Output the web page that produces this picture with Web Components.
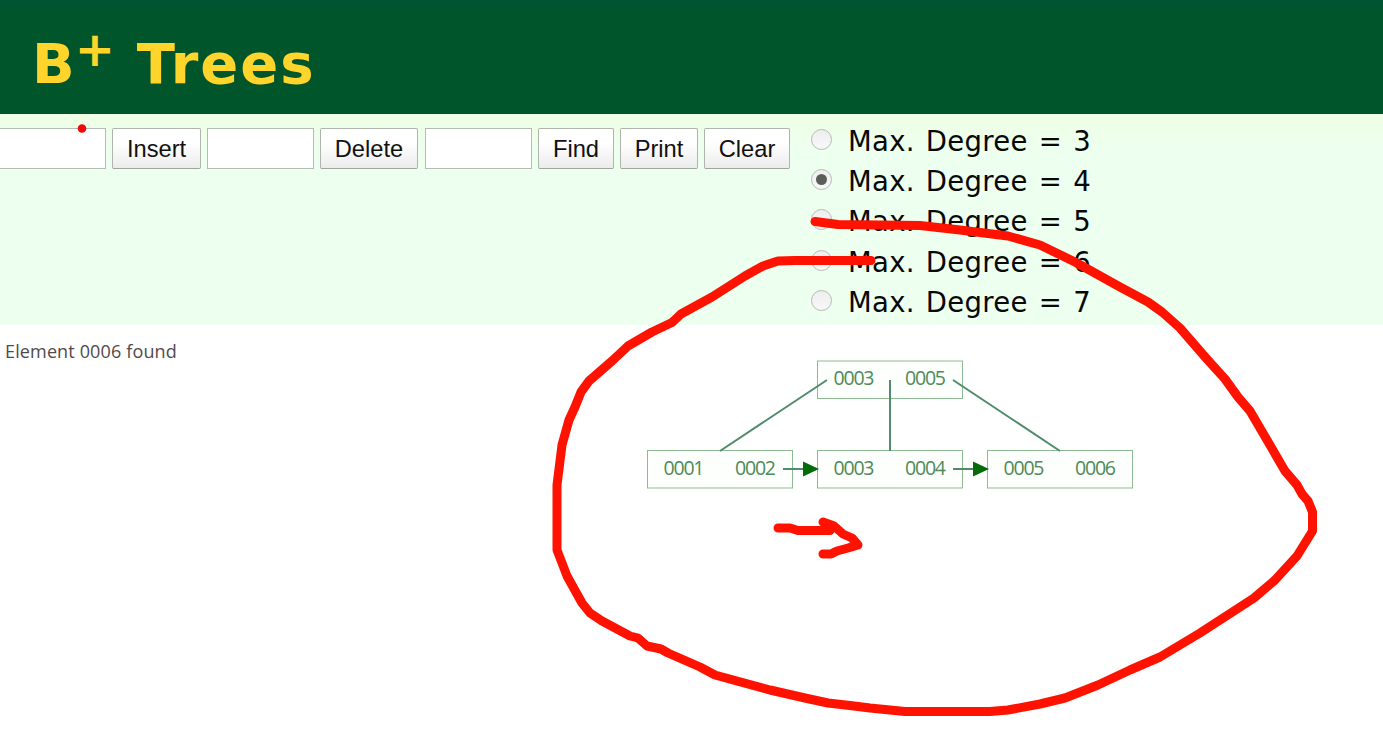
<!DOCTYPE html>
<html lang="en">
<head>
<meta charset="utf-8">
<title>B+ Trees</title>
<style>body{margin:0;background:#fff;overflow:hidden}</style>
</head>
<body>
<bplus-page></bplus-page>
<script>
const define = (name, html) => customElements.define(name, class extends HTMLElement {
  constructor() {
    super();
    const t = document.createElement('template');
    t.innerHTML = html;
    this.attachShadow({ mode: 'open' }).append(t.content.cloneNode(true));
  }
});

define('page-header', `<style>
  :host{display:block;height:114px;box-sizing:border-box;background:linear-gradient(#005336,#00552b 12px);padding:32px 0 0 32px}
  h1{margin:0;font:bold 56px/64px "DejaVu Sans",Verdana,sans-serif;color:#ffd52b;display:flex;white-space:pre}
  .plus{font-size:48px;line-height:34px;width:43px;margin-left:0}
  .word{margin-left:19px;letter-spacing:2px}
</style><h1><span>B</span><span class="plus">+</span><span class="word">Trees</span></h1>`);

define('text-field', `<style>
  :host{display:block;box-sizing:border-box;height:41px;width:107px;border:1px solid #b3bdb3;background:#fff;flex:none}
</style>`);

define('push-button', `<style>
  :host{display:block;box-sizing:border-box;height:41px;flex:none;border:1px solid #adb5ad;border-bottom-color:#9da59d;border-radius:2px;
    background:linear-gradient(#fff 35%,#ececec);font:23.7px/40px "Liberation Sans",Arial,sans-serif;color:#111;text-align:center;white-space:nowrap}
</style><slot></slot>`);

define('radio-option', `<style>
  :host{display:flex;align-items:center;height:40.3px;font:27.5px/40px "DejaVu Sans",Verdana,sans-serif;word-spacing:2px;letter-spacing:.3px;color:#080808;white-space:nowrap}
  i{box-sizing:border-box;width:21px;height:21px;border-radius:50%;border:1px solid #b5bab5;background:linear-gradient(#eee,#f8f8f8);
    display:grid;place-items:center;margin:-3px 16px 0 0;flex:none}
  :host([checked]) i::after{content:"";width:11px;height:11px;border-radius:50%;background:#5b5d5b}
</style><i></i><span><slot></slot></span>`);

define('control-bar', `<style>
  :host{display:flex;height:211px;box-sizing:border-box;background:linear-gradient(#efffe5,#edffef 40px);align-items:flex-start}
  .tools{display:flex;gap:6px;margin:14px 0 0 -1px;width:812px;flex:none}
  .degrees{padding-top:6.6px}
</style>
<div class="tools">
  <text-field></text-field><push-button style="width:89px">Insert</push-button>
  <text-field></text-field><push-button style="width:98px;margin-right:1px">Delete</push-button>
  <text-field></text-field><push-button style="width:76px">Find</push-button>
  <push-button style="width:78px">Print</push-button><push-button style="width:86px">Clear</push-button>
</div>
<div class="degrees">
  <radio-option>Max. Degree = 3</radio-option><radio-option checked>Max. Degree = 4</radio-option>
  <radio-option>Max. Degree = 5</radio-option><radio-option>Max. Degree = 6</radio-option>
  <radio-option>Max. Degree = 7</radio-option>
</div>`);

define('status-message', `<style>
  :host{display:block;padding:14px 0 0 5px;font:18px/25px "Open Sans",sans-serif;letter-spacing:.14px;color:#514a4c}
</style><slot></slot>`);

const node = (x, y, a, b) => `<rect x="${x}" y="${y}" width="145" height="37.5" fill="#fcfffc" stroke="#8dbb91"/>
  <text x="${x + 16}" y="${y + 24}" textLength="41">${a}</text><text x="${x + 87.5}" y="${y + 24}" textLength="41">${b}</text>`;
define('tree-canvas', `<style>
  :host{position:absolute;inset:0;pointer-events:none}
  svg{display:block}
  text{font:19.5px "Open Sans",sans-serif;fill:#4f8a59}
</style>
<svg width="1383" height="738" viewBox="0 0 1383 738">
  ${node(817.5, 361, '0003', '0005')}
  ${node(647.5, 450.5, '0001', '0002')}
  ${node(817.5, 450.5, '0003', '0004')}
  ${node(987.5, 450.5, '0005', '0006')}
  <g fill="none" stroke="#518b6b" stroke-width="2">
    <path d="M827 380L720 451M890 380V451M953 380L1060 451M783 469H805M953 469H975"/>
  </g>
  <path d="M803 461.500L819 469L803 476.500ZM973 461.500L989 469L973 476.500Z" fill="#046b0b"/>
</svg>`);

define('ink-layer', `<style>
  :host{position:absolute;inset:0;pointer-events:none}
  svg{display:block}
</style>
<svg width="1383" height="738" viewBox="0 0 1383 738" fill="none" stroke="#ff1200" stroke-width="9" stroke-linecap="round" stroke-linejoin="round">
  <circle cx="82" cy="128.5" r="4.3" fill="#f20808" stroke="none"/>
  <path d="M815 221.500L838 224.500L920 225.500L960 230L1008 236L1040 245L1075 262L1120 287L1148 302L1162 312L1180 328L1206 358L1225 379L1238 397L1250 411L1267 440L1285 471L1297 485L1302 494L1308 501L1312.500 512V531L1297 556L1275 580L1254 598L1200 633L1160 657L1130 670L1098 685L1065 698L1040 704L1008 710L990 711.500H905L870 708L850 705.500L828 703L805 698L770 690L715 675L700 667L668 653L661 649L647 646L638 638L630 636L602 621L590 613L582 603L567 576L557 550V485L562 445L569 420L575 407L581 392L589 381L612 361L628 346L652 332L672 322.500L681 314L712 297L745 276L763 266L778 261L795 260.500H871"/>
  <path d="M778 528H790L798 530.500H830M823 522L834 526L843 534L852 538L858 545L848 548L837 551L831 554H823"/>
</svg>`);

define('bplus-page', `<style>
  :host{display:block;position:relative;width:1383px;height:738px;background:#fff;overflow:hidden}
</style>
<page-header></page-header><control-bar></control-bar>
<status-message>Element 0006 found</status-message>
<tree-canvas></tree-canvas><ink-layer></ink-layer>`);
</script>
</body>
</html>
